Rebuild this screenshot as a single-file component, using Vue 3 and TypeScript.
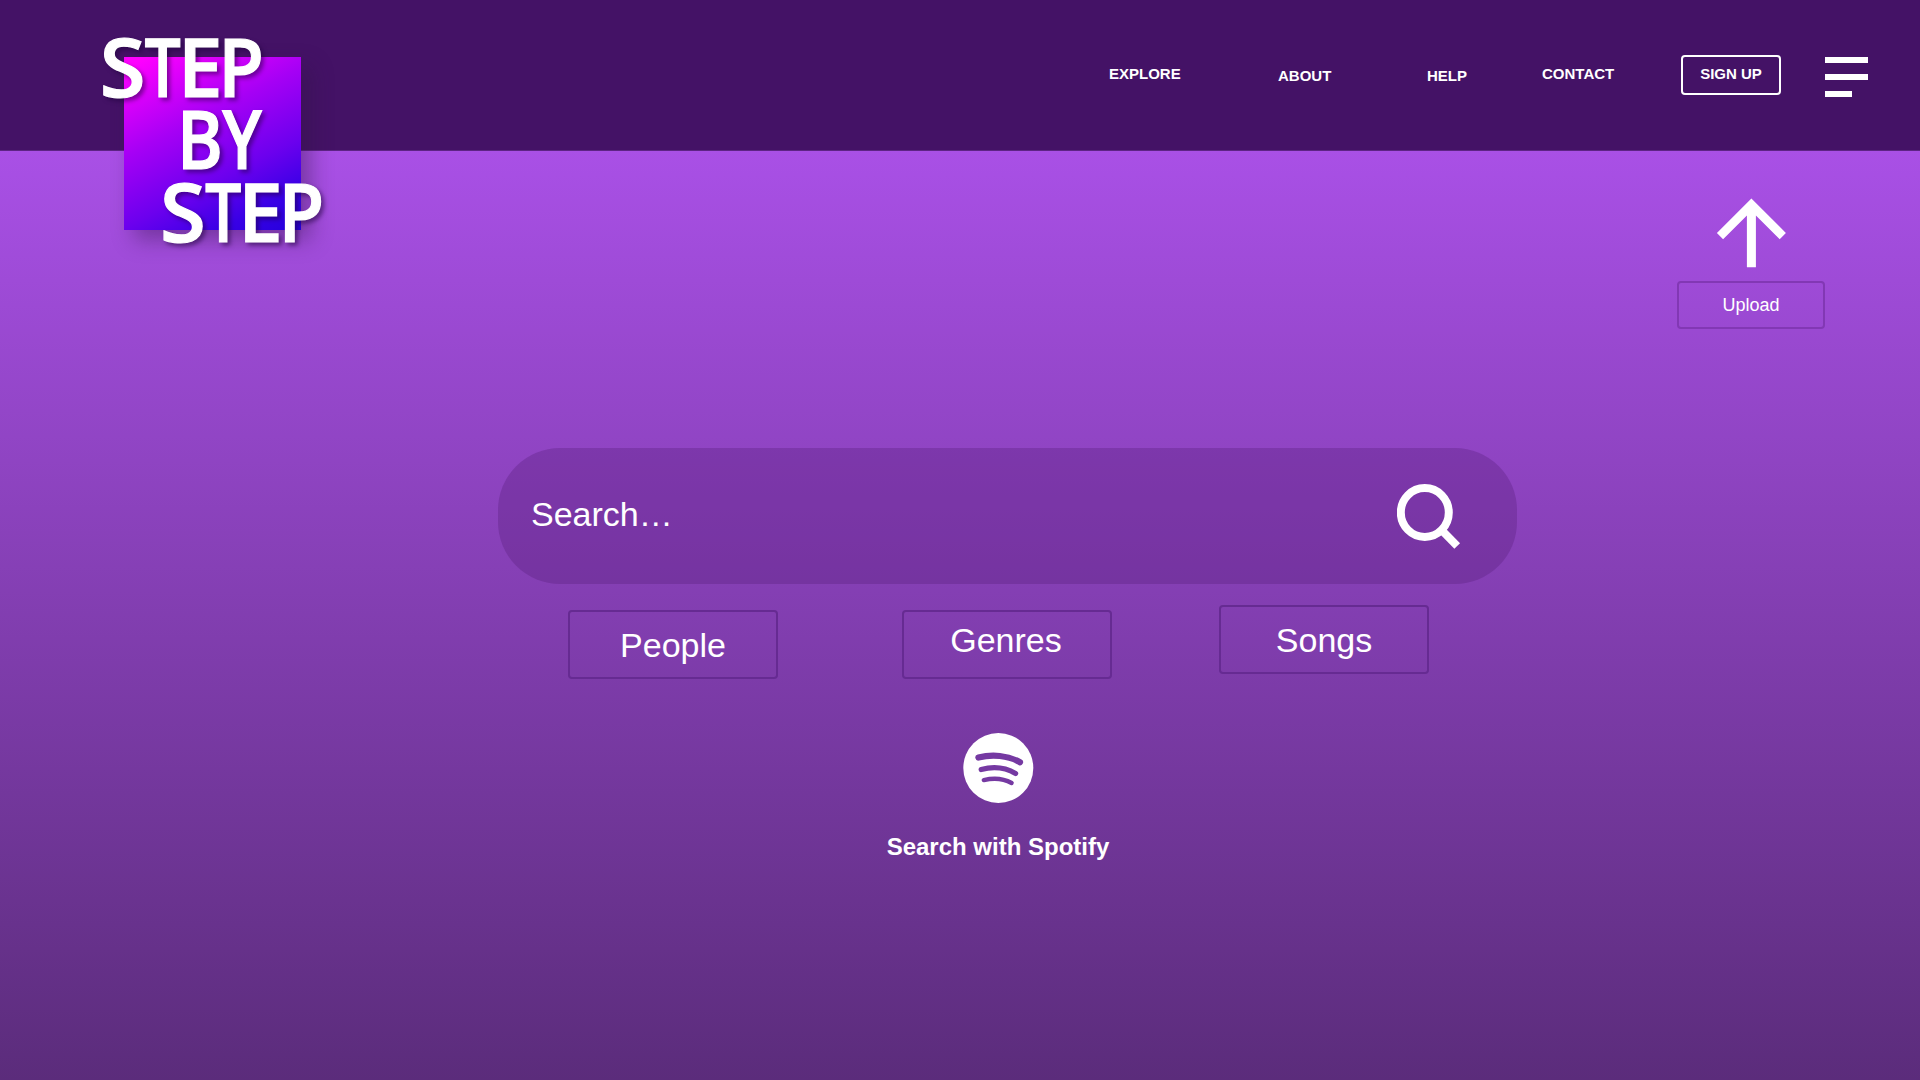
<script setup lang="ts">
interface NavLink {
  label: string
  key: string
}

interface Letter {
  char: string
  left: number
  right: number
}

interface Word {
  baseline: number
  letters: Letter[]
}

const links: NavLink[] = [
  { label: 'EXPLORE', key: 'explore' },
  { label: 'ABOUT', key: 'about' },
  { label: 'HELP', key: 'help' },
  { label: 'CONTACT', key: 'contact' },
]

const filters: NavLink[] = [
  { label: 'People', key: 'people' },
  { label: 'Genres', key: 'genres' },
  { label: 'Songs', key: 'songs' },
]

const step = (offset: number): Letter[] => [
  { char: 'S', left: 102.2 + offset, right: 142.5 + offset },
  { char: 'T', left: 144.8 + offset, right: 181 + offset },
  { char: 'E', left: 184.3 + offset, right: 219 + offset },
  { char: 'P', left: 224 + offset, right: 261 + offset },
]

const words: Word[] = [
  { baseline: 97.4, letters: step(0) },
  {
    baseline: 169.4,
    letters: [
      { char: 'B', left: 182.5, right: 220.7 },
      { char: 'Y', left: 221.6, right: 262.4 },
    ],
  },
  { baseline: 242.3, letters: step(60.3) },
]

// Fits each logo letter's ink to its slot in the condensed wordmark.
const OUTLINE = 1.2
const ctx = document.createElement('canvas').getContext('2d')!
ctx.font = '600 81px "Open Sans", sans-serif'

function fit(letter: Letter): { x: number; length: number } {
  const m = ctx.measureText(letter.char)
  const ink = m.actualBoundingBoxRight + m.actualBoundingBoxLeft
  const scale = (letter.right - letter.left - OUTLINE) / ink
  return {
    x: letter.left + OUTLINE / 2 + m.actualBoundingBoxLeft * scale,
    length: m.width * scale,
  }
}
</script>

<template>
  <div class="page">
    <header class="header">
      <nav class="nav">
        <a v-for="link in links" :key="link.key" class="link" :class="link.key">{{ link.label }}</a>
      </nav>
      <button class="signup">SIGN UP</button>
      <button class="menu" aria-label="Menu">
        <span class="bar"></span>
        <span class="bar"></span>
        <span class="bar short"></span>
      </button>
    </header>

    <div class="logo">
      <svg class="logo-art" width="260" height="250" viewBox="80 20 260 250">
        <g class="wordmark" :stroke-width="OUTLINE">
          <text v-for="word in words" :key="word.baseline" :y="word.baseline"><tspan
            v-for="letter in word.letters"
            :key="letter.char"
            :x="fit(letter).x"
            :textLength="fit(letter).length"
            lengthAdjust="spacingAndGlyphs"
          >{{ letter.char }}</tspan></text>
        </g>
      </svg>
    </div>

    <main class="main">
      <section class="upload">
        <svg width="70" height="70" viewBox="0 0 70 70">
          <path d="M35.4 .5 69.9 35 63.7 41.2 39.9 17.4V69.3H30.9V17.4L7.1 41.2.9 35Z" fill="#fff" />
        </svg>
        <button class="upload-button">Upload</button>
      </section>

      <div class="search">
        <span class="placeholder">Search…</span>
        <svg width="65" height="66" viewBox="0 0 65 66" class="magnifier">
          <ellipse cx="27.8" cy="28.5" rx="24" ry="24.5" fill="none" stroke="#fff" stroke-width="8" />
          <path d="M45 46.5 60.2 62" stroke="#fff" stroke-width="8" />
        </svg>
      </div>

      <div class="filters">
        <button v-for="f in filters" :key="f.key" class="filter" :class="f.key">{{ f.label }}</button>
      </div>

      <section class="spotify">
        <svg width="71" height="71" viewBox="0 0 71 71">
          <circle cx="35.3" cy="35" r="35" fill="#fff" />
          <g fill="none" stroke="#7539a2" stroke-linecap="round">
            <path d="M15.4 24.6C29 21.1 45 22.4 57 29.2" stroke-width="6.2" />
            <path d="M18.2 36.5C30 33.4 42.5 34.6 52.6 40.4" stroke-width="5.2" />
            <path d="M20.8 47.1C30.5 44.8 40 45.2 48.6 50" stroke-width="4.4" />
          </g>
        </svg>
        <span class="spotify-label">Search with Spotify</span>
      </section>
    </main>
  </div>
</template>

<style>
body {
  margin: 0;
}
</style>

<style scoped>
.page {
  position: relative;
  box-sizing: border-box;
  width: 1920px;
  height: 1080px;
  overflow: hidden;
  display: flex;
  flex-direction: column;
  color: #fff;
  font-family: "Liberation Sans", Arial, sans-serif;
  background: linear-gradient(#a950e6 150px, #5b2c7b 1080px);
}

button {
  box-sizing: border-box;
  margin: 0;
  padding: 0;
  color: inherit;
  background: none;
  border: 0;
  font: inherit;
}

.header {
  box-sizing: border-box;
  flex: none;
  display: flex;
  align-items: flex-start;
  justify-content: flex-end;
  height: 151px;
  padding-right: 52px;
  background: #441266;
  border-bottom: 1px solid #5e2485;
}

.nav {
  display: flex;
  padding-top: 64px;
}

.link {
  font-size: 15px;
  font-weight: 700;
  line-height: 20px;
  white-space: nowrap;
}

.explore {
  width: 169px;
}

.about {
  width: 149px;
  padding-top: 2px;
}

.help {
  width: 115px;
  padding-top: 2px;
}

.contact {
  width: 139px;
}

.signup {
  width: 100px;
  height: 40px;
  margin-top: 55px;
  padding-bottom: 3px;
  border: 2px solid #fff;
  border-radius: 4px;
  font-size: 15px;
  font-weight: 700;
}

.menu {
  display: flex;
  flex-direction: column;
  gap: 11px;
  width: 43px;
  margin: 57px 0 0 44px;
}

.bar {
  width: 43px;
  height: 6px;
  background: #fff;
}

.short {
  width: 27px;
}

.logo {
  position: absolute;
  left: 124px;
  top: 57px;
  width: 177px;
  height: 173px;
  background: linear-gradient(153deg, #ff00ff 4%, #a600f5 38%, #6c00ee 65%, #3900e6 84%, #2400dc 100%);
  box-shadow: 10px 10px 20px rgba(50, 20, 70, 0.4);
}

.logo-art {
  position: absolute;
  left: -44px;
  top: -37px;
  overflow: visible;
}

.wordmark {
  fill: #fff;
  stroke: #fff;
  font-family: "Open Sans", sans-serif;
  font-size: 81px;
  font-weight: 600;
  filter: drop-shadow(3px 3px 2px rgba(30, 0, 60, 0.5));
}

.main {
  display: flex;
  flex-direction: column;
}

.upload {
  display: flex;
  flex-direction: column;
  align-items: center;
  width: 148px;
  margin: 47px 0 0 1677px;
}

.upload-button {
  width: 148px;
  height: 48px;
  margin-top: 13px;
  border: 2px solid #8238b4;
  border-radius: 4px;
  font-size: 18px;
}

.search {
  box-sizing: border-box;
  display: flex;
  align-items: center;
  justify-content: space-between;
  width: 1019px;
  height: 136px;
  margin: 119px 0 0 498px;
  padding: 0 55px 0 33px;
  border-radius: 62px;
  background: rgba(82, 26, 115, 0.3);
}

.placeholder {
  padding-bottom: 5px;
  font-size: 34px;
  line-height: 40px;
}

.magnifier {
  margin-top: 1px;
}

.filters {
  display: flex;
  align-items: flex-start;
  margin: 21px 0 0 568px;
}

.filter {
  width: 210px;
  height: 69px;
  border: 2px solid #662b92;
  border-radius: 4px;
  font-size: 34px;
  line-height: 40px;
}

.people {
  margin-top: 5px;
  padding-top: 1px;
}

.genres {
  margin: 5px 0 0 124px;
  padding: 0 2px 9px 0;
}

.songs {
  margin-left: 107px;
}

.spotify {
  display: flex;
  flex-direction: column;
  align-items: center;
  width: 240px;
  margin: 54px 0 0 878px;
}

.spotify-label {
  margin-top: 29px;
  font-size: 24px;
  font-weight: 700;
  line-height: 28px;
}
</style>
